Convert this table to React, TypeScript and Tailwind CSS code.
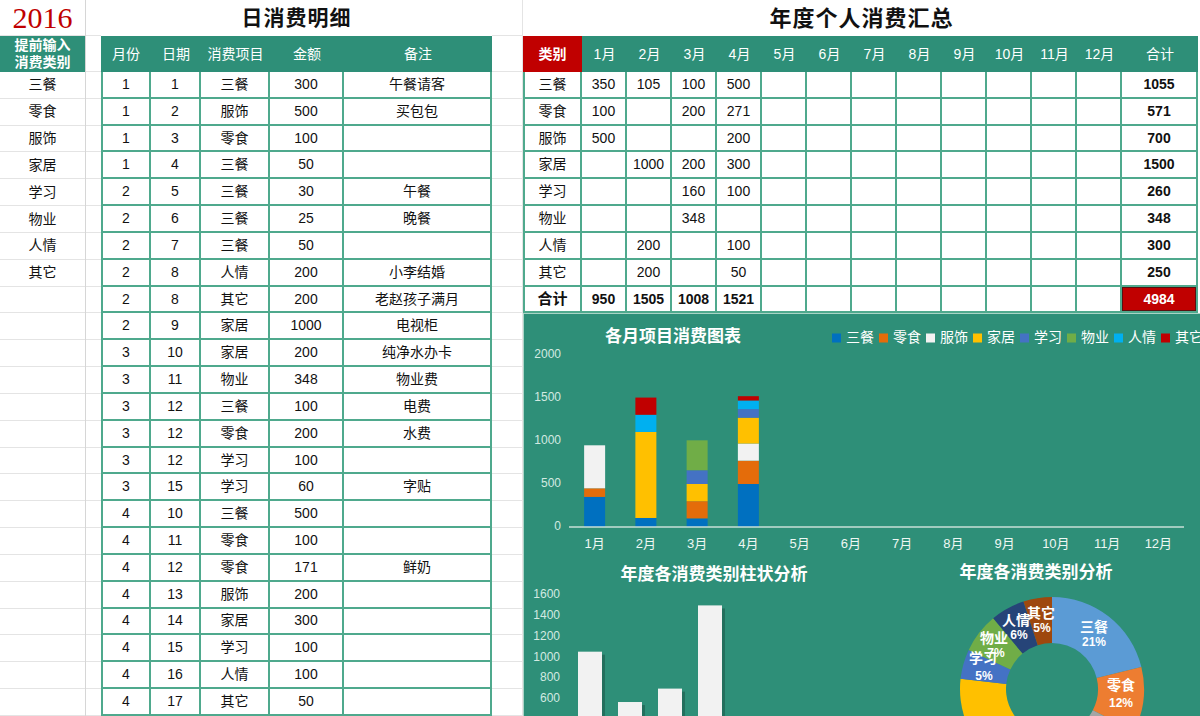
import React from 'react';

const categories = ['三餐', '零食', '服饰', '家居', '学习', '物业', '人情', '其它'];
const months = ['1月', '2月', '3月', '4月', '5月', '6月', '7月', '8月', '9月', '10月', '11月', '12月'];

// stack colours for the monthly chart, in category order
const barColors = ['#0070c0', '#e46c0a', '#f2f2f2', '#ffc000', '#4472c4', '#70ad47', '#00b0f0', '#c00000'];
// donut colours
const pieColors = ['#5b9bd5', '#ed7d31', '#a5a5a5', '#ffc000', '#4472c4', '#70ad47', '#264478', '#9e480e'];

const daily: [number, number, string, number, string][] = [
  [1, 1, '三餐', 300, '午餐请客'],
  [1, 2, '服饰', 500, '买包包'],
  [1, 3, '零食', 100, ''],
  [1, 4, '三餐', 50, ''],
  [2, 5, '三餐', 30, '午餐'],
  [2, 6, '三餐', 25, '晚餐'],
  [2, 7, '三餐', 50, ''],
  [2, 8, '人情', 200, '小李结婚'],
  [2, 8, '其它', 200, '老赵孩子满月'],
  [2, 9, '家居', 1000, '电视柜'],
  [3, 10, '家居', 200, '纯净水办卡'],
  [3, 11, '物业', 348, '物业费'],
  [3, 12, '三餐', 100, '电费'],
  [3, 12, '零食', 200, '水费'],
  [3, 12, '学习', 100, ''],
  [3, 15, '学习', 60, '字贴'],
  [4, 10, '三餐', 500, ''],
  [4, 11, '零食', 100, ''],
  [4, 12, '零食', 171, '鲜奶'],
  [4, 13, '服饰', 200, ''],
  [4, 14, '家居', 300, ''],
  [4, 15, '学习', 100, ''],
  [4, 16, '人情', 100, ''],
  [4, 17, '其它', 50, ''],
];

const monthly: (number | null)[][] = [
  [350, 105, 100, 500],
  [100, null, 200, 271],
  [500, null, null, 200],
  [null, 1000, 200, 300],
  [null, null, 160, 100],
  [null, null, 348, null],
  [null, 200, null, 100],
  [null, 200, null, 50],
];

const rowTotals = monthly.map((r) => r.reduce<number>((s, v) => s + (v ?? 0), 0));
const colTotals = [0, 1, 2, 3].map((m) => monthly.reduce<number>((s, r) => s + (r[m] ?? 0), 0));
const grandTotal = rowTotals.reduce((a, b) => a + b, 0);

const rows = Array.from({ length: 24 }, (_, i) => i);

function CategoryColumn() {
  return (
    <div className="w-[86px] shrink-0 border-r border-[#d6d6d6]">
      <div className="h-[36px] flex items-center justify-center border-b border-[#e4e4e4]">
        <span className="font-['Liberation_Serif',serif] text-[30px] leading-none text-[#c00000]">2016</span>
      </div>
      <div className="h-[36px] bg-[#2e8f78] flex items-center justify-center text-center text-white font-bold text-[14px] leading-[17px]">
        提前输入
        <br />
        消费类别
      </div>
      {rows.map((i) => (
        <div key={i} className="h-[26.83px] flex items-center justify-center border-b border-[#e4e4e4] text-[14px]">
          {categories[i] ?? ''}
        </div>
      ))}
    </div>
  );
}

function Filler({ className }: { className: string }) {
  return (
    <div className={className}>
      <div className="h-[36px] border-b border-[#e4e4e4]" />
      <div className="h-[36px] border-b border-[#e4e4e4]" />
      {rows.map((i) => (
        <div key={i} className="h-[26.83px] border-b border-[#e4e4e4]" />
      ))}
    </div>
  );
}

function DailyTable() {
  return (
    <div className="w-[391px] shrink-0">
      <div className="h-[36px] flex items-center justify-center text-[21px] font-bold tracking-[1px]">日消费明细</div>
      <div className="h-[36px] bg-[#2e8f78] grid grid-cols-[50px_50px_69px_74px_148px] text-white text-[14px]">
        {['月份', '日期', '消费项目', '金额', '备注'].map((h) => (
          <div key={h} className="flex items-center justify-center">
            {h}
          </div>
        ))}
      </div>
      <div className="border-l-2 border-[#4fa98d]">
        {daily.map((r, i) => (
          <div key={i} className="grid grid-cols-[48px_50px_69px_74px_148px] h-[26.83px] text-[14px]">
            {r.map((c, j) => (
              <div key={j} className="border-r-2 border-b-2 border-[#4fa98d] flex items-center justify-center">
                {c}
              </div>
            ))}
          </div>
        ))}
      </div>
    </div>
  );
}

function SummaryTable() {
  return (
    <>
      <div className="h-[36px] flex items-center justify-center text-[22px] font-bold tracking-[1px]">年度个人消费汇总</div>
      <div className="h-[36px] w-[675px] grid grid-cols-[59px_repeat(12,45px)_76px] bg-[#2e8f78] text-white text-[14px]">
        <div className="bg-[#c00000] font-bold flex items-center justify-center">类别</div>
        {months.map((m) => (
          <div key={m} className="flex items-center justify-center">
            {m}
          </div>
        ))}
        <div className="flex items-center justify-center">合计</div>
      </div>
      <div className="w-[675px] border-l-2 border-[#4fa98d]">
        {categories.map((c, i) => (
          <div key={c} className="grid grid-cols-[57px_repeat(12,45px)_76px] h-[26.83px] text-[14px]">
            <div className="border-r-2 border-b-2 border-[#4fa98d] flex items-center justify-center">{c}</div>
            {months.map((m, j) => (
              <div key={m} className="border-r-2 border-b-2 border-[#4fa98d] flex items-center justify-center">
                {j < 4 ? monthly[i][j] ?? '' : ''}
              </div>
            ))}
            <div className="border-r-2 border-b-2 border-[#4fa98d] flex items-center justify-center font-bold">
              {rowTotals[i]}
            </div>
          </div>
        ))}
        <div className="grid grid-cols-[57px_repeat(12,45px)_76px] h-[26.83px] text-[14px] font-bold">
          <div className="border-r-2 border-b-2 border-[#4fa98d] flex items-center justify-center text-[15px]">合计</div>
          {months.map((m, j) => (
            <div key={m} className="border-r-2 border-b-2 border-[#4fa98d] flex items-center justify-center">
              {j < 4 ? colTotals[j] : ''}
            </div>
          ))}
          <div className="border-r-2 border-b-2 border-[#4fa98d] bg-[#c00000] text-white shadow-[inset_0_0_0_1px_#5a1010] flex items-center justify-center">
            {grandTotal}
          </div>
        </div>
      </div>
    </>
  );
}

function MonthlyChart() {
  const y0 = 213;
  const k = 0.086;
  const x0 = 45;
  const step = 51.25;
  const bw = 21;
  return (
    <svg width={676} height={245} className="block shrink-0">
      <text x={149} y={24} fill="#fff" fontSize={17} fontWeight={700} textAnchor="middle" dominantBaseline="middle">
        各月项目消费图表
      </text>
      {categories.map((c, i) => (
        <g key={c}>
          <rect x={308 + 47 * i} y={19.5} width={9} height={9} fill={barColors[i]} />
          <text x={322 + 47 * i} y={24} fill="#fff" fontSize={14} dominantBaseline="middle">
            {c}
          </text>
        </g>
      ))}
      {[2000, 1500, 1000, 500, 0].map((v) => (
        <text key={v} x={37} y={y0 - v * k} textAnchor="end" fontSize={12} fill="#d3eae2" dominantBaseline="middle">
          {v}
        </text>
      ))}
      {[0, 1, 2, 3].map((m) => {
        let acc = 0;
        const cx = x0 + step * (m + 0.5);
        return (
          <g key={m}>
            {monthly.map((r, i) => {
              const v = r[m] ?? 0;
              if (!v) return null;
              const y = y0 - (acc + v) * k;
              acc += v;
              return <rect key={i} x={cx - bw / 2} y={y} width={bw} height={v * k} fill={barColors[i]} />;
            })}
          </g>
        );
      })}
      <line x1={x0} x2={660} y1={y0} y2={y0} stroke="#c9dfd7" strokeWidth={1.5} />
      {months.map((m, i) => (
        <text key={m} x={x0 + step * (i + 0.5)} y={231} fill="#eef7f3" fontSize={13} textAnchor="middle" dominantBaseline="middle">
          {m}
        </text>
      ))}
    </svg>
  );
}

function CategoryBarChart() {
  const top = 36;
  const k = 0.104;
  const yOf = (v: number) => top + (1600 - v) * k;
  return (
    <svg width={330} height={160} className="block shrink-0">
      <text x={190} y={17} fill="#fff" fontSize={17} fontWeight={700} textAnchor="middle" dominantBaseline="middle">
        年度各消费类别柱状分析
      </text>
      {[1600, 1400, 1200, 1000, 800, 600].map((v) => (
        <text key={v} x={36} y={yOf(v)} textAnchor="end" fontSize={12} fill="#d3eae2" dominantBaseline="middle">
          {v}
        </text>
      ))}
      {rowTotals.map((v, i) => {
        const x = 54 + 40 * i;
        const y = yOf(v);
        return (
          <g key={i}>
            <rect x={x + 3} y={y + 3} width={24} height={200} fill="#000" opacity={0.22} />
            <rect x={x} y={y} width={24} height={200} fill="#f2f2f2" />
          </g>
        );
      })}
    </svg>
  );
}

function arcPath(cx: number, cy: number, r0: number, r1: number, a0: number, a1: number) {
  const p = (r: number, a: number) => [cx + r * Math.sin((a * Math.PI) / 180), cy - r * Math.cos((a * Math.PI) / 180)];
  const large = a1 - a0 > 180 ? 1 : 0;
  const [x1, y1] = p(r1, a0);
  const [x2, y2] = p(r1, a1);
  const [x3, y3] = p(r0, a1);
  const [x4, y4] = p(r0, a0);
  return `M${x1} ${y1} A${r1} ${r1} 0 ${large} 1 ${x2} ${y2} L${x3} ${y3} A${r0} ${r0} 0 ${large} 0 ${x4} ${y4} Z`;
}

function DonutChart() {
  const cx = 198;
  const cy = 130;
  let a = 0;
  const labels: [string, string, number, number, number, number][] = [
    ['三餐', '21%', 240, 69, 240, 84],
    ['零食', '12%', 267, 127, 267, 145],
    ['学习', '5%', 129, 100, 130, 118],
    ['物业', '7%', 140, 80, 142, 95],
    ['人情', '6%', 162, 62, 165, 77],
    ['其它', '5%', 187, 55, 188, 70],
  ];
  return (
    <svg width={347} height={160} className="block shrink-0">
      <text x={182} y={15} fill="#fff" fontSize={17} fontWeight={700} textAnchor="middle" dominantBaseline="middle">
        年度各消费类别分析
      </text>
      {rowTotals.map((v, i) => {
        const a0 = a;
        const a1 = a + (v / grandTotal) * 360;
        a = a1;
        return <path key={i} d={arcPath(cx, cy, 46, 92, a0, a1)} fill={pieColors[i]} />;
      })}
      {labels.map(([n, pct, x1, y1, x2, y2]) => (
        <g key={n} fill="#fff" fontWeight={700} textAnchor="middle" dominantBaseline="middle">
          <text x={x1} y={y1} fontSize={14}>
            {n}
          </text>
          <text x={x2} y={y2} fontSize={12}>
            {pct}
          </text>
        </g>
      ))}
    </svg>
  );
}

function SummarySection() {
  return (
    <div className="w-[677px] shrink-0 flex flex-col">
      <SummaryTable />
      <div className="flex-1 bg-[#2e8f78] border-t border-l border-[#a9d4c6] flex flex-col overflow-hidden">
        <MonthlyChart />
        <div className="flex">
          <CategoryBarChart />
          <DonutChart />
        </div>
      </div>
    </div>
  );
}

export default function App() {
  return (
    <div className="w-[1200px] h-[716px] overflow-hidden bg-white flex font-['Liberation_Sans','Noto_Sans_CJK_SC',sans-serif] text-[#111]">
      <CategoryColumn />
      <Filler className="w-[15px] shrink-0" />
      <DailyTable />
      <Filler className="w-[31px] shrink-0 border-r border-[#e4e4e4]" />
      <SummarySection />
    </div>
  );
}
